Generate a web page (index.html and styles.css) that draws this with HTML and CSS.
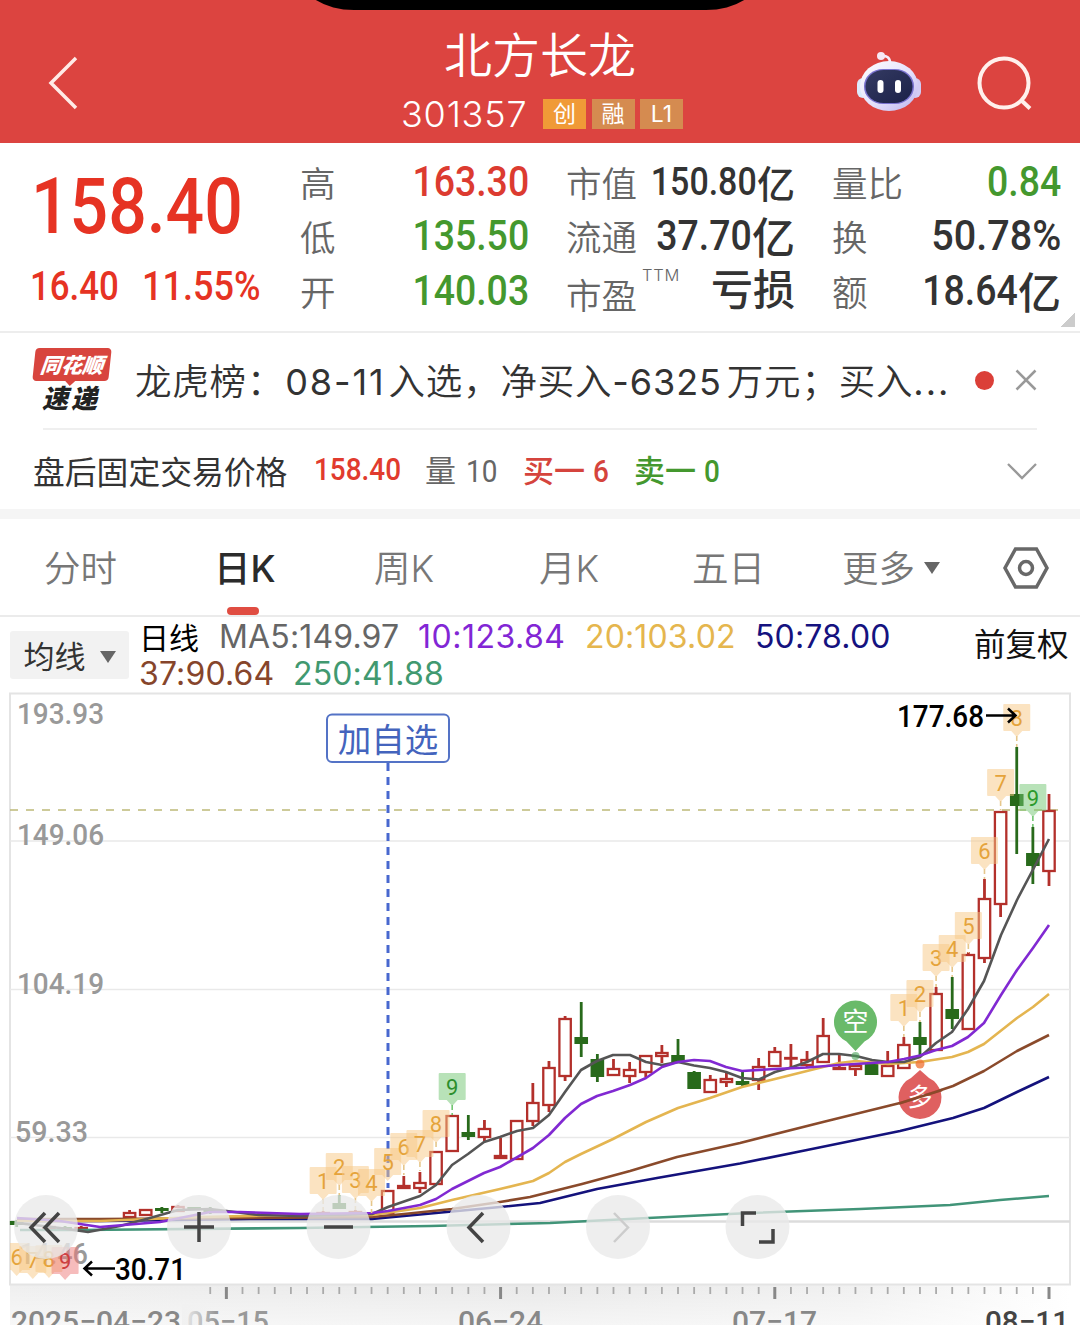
FILE: index.html
```html
<!DOCTYPE html>
<html lang="zh-CN">
<head>
<meta charset="utf-8">
<title>北方长龙 301357</title>
<link rel="stylesheet" href="styles.css">
</head>
<body>
<header class="header">
  <div class="island"></div>
  <svg class="back" width="34" height="56" viewBox="0 0 34 56"><path d="M29 3 4 28 29 53"/></svg>
  <div class="title">
    <h1>北方长龙</h1>
    <div class="code"><span class="code-num">301357</span><span class="tag tag-hot">创</span><span class="tag">融</span><span class="tag">L1</span></div>
  </div>
  <svg class="robot" width="66" height="62" viewBox="0 0 66 62">
    <defs>
      <linearGradient id="shell" x1="0" y1="0" x2="1" y2="1"><stop offset="0" stop-color="#fff"/><stop offset=".55" stop-color="#e4e0fb"/><stop offset="1" stop-color="#bcb4ee"/></linearGradient>
      <linearGradient id="visor" x1="0" y1="0" x2="1" y2="1"><stop offset="0" stop-color="#343a62"/><stop offset="1" stop-color="#1b2148"/></linearGradient>
    </defs>
    <path d="M25 6q9-1 9 7" fill="none" stroke="#f5eefc" stroke-width="2.6"/><circle cx="25" cy="6" r="4" fill="#f7e9f5"/>
    <rect x="1" y="28" width="12" height="20" rx="6" fill="#dceafb"/><rect x="53" y="28" width="12" height="20" rx="6" fill="#d2ccf4"/>
    <ellipse cx="33" cy="36" rx="29" ry="25" fill="url(#shell)"/>
    <rect x="8" y="19" width="50" height="35" rx="19" ry="17" fill="#7972cf"/>
    <rect x="9.500" y="20" width="47" height="33" rx="18" ry="16" fill="url(#visor)"/>
    <rect x="21.500" y="30" width="6" height="13" rx="3" fill="#fff"/><rect x="39" y="30" width="6" height="13" rx="3" fill="#fff"/>
  </svg>
  <svg class="search" width="58" height="58" viewBox="0 0 58 58"><circle cx="28" cy="28" r="24.500"/><path d="M45 45 54 53.500"/></svg>
</header>

<section class="quote">
  <div class="price">
    <div class="last"><span class="num">158.40</span></div>
    <div class="change"><span class="num">16.40</span><span class="num pct">11.55%</span></div>
  </div>
  <dl class="stats stats-a">
    <div><dt>高</dt><dd class="up"><span class="num">163.30</span></dd></div>
    <div><dt>低</dt><dd class="down"><span class="num">135.50</span></dd></div>
    <div><dt>开</dt><dd class="down"><span class="num">140.03</span></dd></div>
  </dl>
  <dl class="stats stats-b">
    <div><dt>市值</dt><dd class="small"><span class="num">150.80</span>亿</dd></div>
    <div><dt>流通</dt><dd><span class="num">37.70</span>亿</dd></div>
    <div class="pe"><dt>市盈<sup>TTM</sup></dt><dd>亏损</dd></div>
  </dl>
  <dl class="stats stats-c">
    <div><dt>量比</dt><dd class="down"><span class="num">0.84</span></dd></div>
    <div><dt>换</dt><dd><span class="num wide">50.78%</span></dd></div>
    <div><dt>额</dt><dd><span class="num">18.64</span>亿</dd></div>
  </dl>
  <i class="corner"></i>
</section>

<section class="news">
  <div class="logo"><span class="logo-top">同花顺</span><span class="logo-bottom">速递</span></div>
  <p>龙虎榜：<b class="day">08-11</b>入选，净买入<b class="amount">-6325</b>万元；买入<b class="more">...</b></p>
  <i class="dot"></i>
  <svg class="close" width="22" height="22" viewBox="0 0 22 22"><path d="M1.500 1.500 20.500 20.500M20.500 1.500 1.500 20.500"/></svg>
</section>

<section class="after">
  <span class="after-label">盘后固定交易价格</span>
  <span class="num a-price">158.40</span>
  <span class="a-vol">量 <span class="num">10</span></span>
  <span class="a-buy">买一 <span class="num">6</span></span>
  <span class="a-sell">卖一 <span class="num">0</span></span>
  <svg class="chev" width="30" height="18" viewBox="0 0 30 18"><path d="M1 2 15 16 29 2"/></svg>
</section>

<nav class="tabs">
  <a class="t1">分时</a><a class="t2 on">日K</a><a class="t3">周K</a><a class="t4">月K</a><a class="t5">五日</a><a class="t6">更多<i></i></a>
  <svg class="gear" width="46" height="42" viewBox="0 0 46 42"><path d="M12.500 2h21L44 21 33.500 40h-21L2 21z"/><circle cx="23" cy="21" r="6.500"/></svg>
</nav>

<section class="legend">
  <button class="picker">均线<i></i></button>
  <div class="mas">
    <div class="ma-row"><span class="k">日线</span><span class="m5">MA5:149.97</span><span class="m10">10:123.84</span><span class="m20">20:103.02</span><span class="m50">50:78.00</span></div>
    <div class="ma-row"><span class="m37">37:90.64</span><span class="m250">250:41.88</span></div>
  </div>
  <span class="adjust">前复权</span>
</section>

<svg class="chart" id="chart" width="1080" height="633" viewBox="0 692 1080 633"></svg>
<script src="chart.js"></script>
</body>
</html>
```

FILE: styles.css
```css
* { box-sizing: border-box; margin: 0; padding: 0; }
body { width: 1080px; height: 1325px; overflow: hidden; background: #fff; color: #333; font-family: Inter, "Noto Sans CJK SC", sans-serif; }
.num { display: inline-block; font-family: Roboto, sans-serif; font-weight: 500; transform: scaleX(.87); transform-origin: right center; }
.num.wide { transform: scaleX(.92); }
svg { display: block; }

.header { position: relative; display: flex; height: 143px; background: #dc4440; color: #fff; }
.island { position: absolute; left: 300px; top: -50px; width: 460px; height: 60px; border-radius: 0 0 54px 54px / 0 0 34px 34px; background: #000; }
.back { margin: 55px 0 0 47px; fill: none; stroke: #ffebe7; stroke-width: 3.5; }
.title { width: 300px; margin: 22px 0 0 320px; }
.title h1 { margin-left: 43px; font: 350 48px/60px "Noto Sans CJK SC", sans-serif; white-space: nowrap; }
.code { display: flex; align-items: center; margin-top: 14px; height: 36px; }
.code-num { width: 142px; font-size: 36px; font-weight: 350; letter-spacing: .8px; }
.tag { width: 43px; height: 30px; margin-right: 5.500px; background: #d58b50; font: 23px/30px Inter, "Noto Sans CJK SC", sans-serif; text-align: center; }
.tag-hot { background: #f09a37; }
.robot { margin: 50px 0 0 155px; }
.search { margin: 55px 0 0 54px; fill: none; stroke: #fff0ec; stroke-width: 4; }

.quote { position: relative; display: flex; height: 190px; border-bottom: 2px solid #ededed; }
.price { width: 300px; padding-left: 30px; color: #e63323; white-space: nowrap; }
.price .num { transform-origin: left center; }
.last { height: 113px; padding: 16px 0 0 1px; font-size: 78px; line-height: 92px; }
.last .num { transform: scaleX(.87); }
.change { display: flex; height: 62px; font-size: 41px; line-height: 61px; }
.change .num { width: 112px; transform: scaleX(.85); }
.change .pct { transform: scaleX(.88); }
.stats { padding-top: 13px; font-size: 43px; }
.stats-a { width: 229px; }
.stats-b { width: 229px; margin-left: 37px; }
.stats-c { width: 229px; margin-left: 37px; }
.stats > div { display: flex; height: 54.300px; align-items: center; }
.stats dt { flex: none; width: 70px; margin-top: -2px; font: 350 35.500px/54px "Noto Sans CJK SC", sans-serif; color: #666; white-space: nowrap; }
.stats dd { flex: 1; min-width: 0; margin-top: -4px; display: flex; justify-content: flex-end; align-items: center; line-height: 54px; font-family: "Noto Sans CJK SC", sans-serif; font-weight: 500; white-space: nowrap; }
.stats .small { font-size: 38px; margin-top: -2px; }
.stats .small .num { font-size: 39px; }
.up { color: #dc3b30; }
.down { color: #44982e; }
.pe dt { position: relative; top: 3px; }
.pe dd { margin-top: -10px; font-size: 42px; }
.pe sup { position: absolute; left: 76px; top: -4px; font: 350 16.500px/24px Inter, sans-serif; letter-spacing: .8px; }
.corner { position: absolute; right: 5px; bottom: 4px; width: 14px; height: 14px; background: linear-gradient(135deg, transparent 50%, #ccc 50%); }

.news { display: flex; align-items: center; height: 96px; padding-left: 33px; }
.logo { width: 102px; height: 66px; }
.logo span { display: block; font-family: "Noto Sans CJK SC", sans-serif; font-weight: 900; font-style: italic; text-align: center; }
.logo-top { position: relative; width: 76px; height: 33px; margin-left: 1px; border-radius: 4px; background: #d8453e; color: #fff; font-size: 21px; line-height: 32px; transform: skewX(-6deg); }
.logo-top::after { content: ""; position: absolute; left: 32px; top: 32px; border: 6px solid transparent; border-top-color: #d8453e; border-bottom: 0; }
.logo-bottom { width: 76px; margin-top: -1px; color: #222; font-size: 26px; line-height: 33px; letter-spacing: 3px; }
.news p { width: 820px; font: 350 36.500px/56px "Noto Sans CJK SC", sans-serif; letter-spacing: .8px; white-space: nowrap; }
.news b { font-family: Inter, sans-serif; font-weight: 400; font-size: 36px; }
.news .day { margin: 0 3px 0 1px; letter-spacing: 1.900px; }
.news .amount { margin-right: 5px; letter-spacing: .9px; }
.news .more { letter-spacing: 2px; }
.dot { width: 19px; height: 19px; margin: -2px 0 0 20px; border-radius: 50%; background: #db3f38; }
.close { margin: -2px 0 0 21px; fill: none; stroke: #999; stroke-width: 2.500; }

.after { position: relative; display: flex; align-items: center; height: 80px; padding: 2px 0 0 33px; font: 31px/44px "Noto Sans CJK SC", sans-serif; white-space: nowrap; }
.after::before { content: ""; position: absolute; left: 43px; right: 43px; top: -1px; height: 2px; background: #efefef; }
.after .num { transform: scaleX(.9); transform-origin: left center; font-size: 31px; }
.after-label { width: 281px; font-size: 31.800px; }
.after .a-price { width: 111px; color: #e13b2e; }
.a-vol { width: 98px; color: #666; word-spacing: 3px; }
.a-buy { width: 111px; color: #d5443d; font-weight: 500; word-spacing: 1px; }
.a-sell { color: #44982e; font-weight: 500; word-spacing: 1px; }
.a-vol .num { font-weight: 400; }
.chev { position: absolute; left: 1007px; top: 33px; fill: none; stroke: #999; stroke-width: 2.300; }

.tabs { display: flex; height: 108px; border-top: 10px solid #f5f5f5; border-bottom: 2px solid #ebebeb; padding-left: 44px; font: 350 36.500px/101px Inter, "Noto Sans CJK SC", sans-serif; color: #777; }
.tabs a { position: relative; white-space: nowrap; }
.t1 { width: 170px; } .t2 { width: 160px; } .t3 { width: 165px; } .t4 { width: 153px; } .t5 { width: 150px; } .t6 { width: 161px; }
.tabs .on { color: #2b2b2b; font-weight: 500; }
.on::after { content: ""; position: absolute; left: 13px; bottom: 0; width: 32px; height: 8px; border-radius: 4px; background: #e04d42; }
.tabs i, .picker i { display: inline-block; border: 8px solid transparent; border-top: 12px solid #666; border-bottom: 0; vertical-align: 5px; }
.tabs i { margin-left: 9px; vertical-align: 8px; }
.gear { margin-top: 28px; fill: none; stroke: #686868; stroke-width: 3.500; }

.legend { display: flex; height: 75px; padding-left: 10px; }
.picker { width: 119px; height: 48px; margin-top: 14px; border: 0; border-radius: 3px; background: #f2f2f2; color: #333; font: 31px/48px "Noto Sans CJK SC", sans-serif; white-space: nowrap; }
.picker i { margin-left: 14px; }
.mas { width: 845px; padding-left: 10px; font-size: 32px; line-height: 40px; letter-spacing: .15px; }
.ma-row { display: flex; height: 37px; white-space: nowrap; }
.k { width: 80px; color: #000; font: 30px/38px "Noto Sans CJK SC", sans-serif; letter-spacing: 0; }
.m5 { width: 199px; color: #666; } .m10 { width: 167px; color: #8226d5; letter-spacing: .5px; } .m20 { width: 170px; color: #e5b64e; } .m50 { color: #15127f; }
.m37 { width: 154px; color: #86452b; } .m250 { color: #419970; }
.adjust { margin-top: 1px; color: #111; font: 31.500px/48px "Noto Sans CJK SC", sans-serif; white-space: nowrap; }

.chart text { font-family: Roboto, "Noto Sans CJK SC", sans-serif; font-weight: 500; }
.chart .axis { fill: #999; font-size: 30px; }
.chart .date { font-size: 30px; }
.chart .mark { fill: #000; font-size: 32px; }
.chart .line { fill: none; stroke-width: 2.600; stroke-linejoin: round; }
.chart .icon { fill: none; stroke: #444; stroke-width: 3.500; }
.chart .badge { font-size: 22px; text-anchor: middle; font-weight: 400; }
```

FILE: chart.js
```js
const RED = '#b3302b', GREEN = '#286a1b';
const out = [];
const add = s => out.push(s);
const X = k => 1049 - 16.13 * k;
const text = (cls, x, y, w, s, extra = '') =>
  add(`<text class="${cls}" x="${x}" y="${y}" textLength="${w}" lengthAdjust="spacingAndGlyphs" ${extra}>${s}</text>`);

// time axis background
add(`<defs><linearGradient id="gx"><stop offset="0" stop-color="#efefef"/><stop offset=".5" stop-color="#e9e9e9"/><stop offset=".8" stop-color="#f0f0f0"/><stop offset="1" stop-color="#fff"/></linearGradient>
<linearGradient id="gy" x2="0" y2="1"><stop offset="0" stop-color="#fff" stop-opacity="0"/><stop offset="1" stop-color="#fff" stop-opacity=".55"/></linearGradient></defs>
<rect x="10" y="1285" width="1060" height="40" fill="url(#gx)"/><rect x="10" y="1285" width="1060" height="40" fill="url(#gy)"/>`);

// frame and grid
add('<rect x="10" y="693.5" width="1060" height="591" fill="none" stroke="#e4e4e4" stroke-width="2"/>');
[841, 989.5, 1137.5].forEach(y => add(`<path d="M10 ${y}H1070" stroke="#e9e9e9" stroke-width="1.6"/>`));
add('<path d="M10 1221.5H1070" stroke="#dcdcdc" stroke-width="2.6"/>');
add('<path d="M10 810H1066" stroke="#bdb978" stroke-width="1.6" stroke-dasharray="8 8"/>');
text('axis', 17, 724, 87, '193.93');
text('axis', 17, 845, 87, '149.06');
text('axis', 17, 994, 87, '104.19');
text('axis', 15, 1142, 73, '59.33');
text('axis', 19, 1264, 69, '14.46');

// watch-list marker
add('<path d="M388 763V1188" stroke="#4868cf" stroke-width="3" stroke-dasharray="8 6"/>');

// candles: [k, up, high, bodyTop, bodyBottom, low]
[[0,1,794,810,872,886],[1,0,827,853,866,884],[2,0,747,794,806,854],[3,1,811,811,905,917],[4,1,879,898,959,963],
[5,1,952,954,1030,1030],[6,0,977,1009,1019,1029],[7,1,987,993,1051,1051],[8,0,1022,1037,1045,1057],[9,1,1037,1044,1069,1069],
[10,1,1051,1065,1077,1077],[11,0,1064,1064,1075,1075],[12,1,1064,1065,1070,1076],[13,1,1055,1067,1070,1070],[14,1,1018,1035,1063,1063],
[15,1,1051,1059,1066,1068],[16,1,1044,1057,1059,1067],[17,1,1047,1051,1067,1067],[18,1,1058,1066,1081,1090],[19,0,1072,1081,1085,1086],
[20,1,1073,1078,1083,1087],[21,1,1075,1079,1093,1093],[22,0,1071,1072,1089,1089],[23,0,1039,1055,1062,1062],[24,1,1045,1052,1057,1063],
[25,1,1055,1055,1073,1077],[26,1,1062,1069,1077,1083],[27,1,1059,1068,1076,1076],[28,0,1054,1059,1077,1082],[29,0,1002,1037,1044,1057],
[30,1,1016,1018,1077,1081],[31,1,1061,1067,1106,1112],[32,1,1083,1102,1122,1126],[33,1,1120,1120,1160,1160],[34,1,1138,1155,1159,1159],
[35,1,1120,1128,1138,1141],[36,0,1115,1132,1137,1140],[37,1,1115,1115,1152,1152],[38,1,1151,1151,1185,1185],[39,1,1172,1182,1189,1193],
[40,1,1176,1185,1189,1189],[41,1,1190,1190,1214,1214],[43,1,1210,1211,1213,1213],[44,0,1195,1203,1209,1209],[45,1,1211,1212,1213,1213],
[49,1,1213,1215,1217,1218],[52,0,1207,1210,1213,1214],[53,0,1207,1207,1210,1210],[54,1,1205,1206,1212,1212],[55,0,1207,1208,1211,1213],
[56,1,1209,1209,1216,1216],[57,1,1210,1212,1218,1218],[60,1,1226,1227,1229,1230],[61,0,1226,1227,1230,1230],[62,1,1224,1226,1229,1232],[64,0,1220,1221,1225,1227]
].forEach(([k, up, h, t, b, l]) => {
  const x = X(k), c = up ? RED : GREEN;
  add(`<path d="M${x} ${h}V${t}M${x} ${b}V${l}" stroke="${c}" stroke-width="2.8"/>`);
  if (up) add(`<rect x="${x - 5.7}" y="${t + 1}" width="11.4" height="${Math.max(b - t - 2, .6)}" fill="#fff" stroke="${c}" stroke-width="2.3"/>`);
  else add(`<rect x="${x - 6.8}" y="${t}" width="13.6" height="${b - t}" fill="${c}"/>`);
});

// moving averages
[['#419478', '20,1230 80,1230 300,1228 430,1226 550,1223 648,1218 750,1213 860,1209 950,1205 1000,1200 1049,1196'],
['#14127c', '17,1221 100,1221 250,1219 372,1219 436,1213 500,1207 540,1203 597,1189 657,1178 740,1163.5 807,1150 900,1131 953,1118 984,1108 1017,1092 1049,1077'],
['#8a4a2b', '17,1219 100,1219 250,1218 372,1217 404,1214 452,1209 500,1202 530,1197 558,1190 582,1184 630,1171 677,1157 740,1143 823,1122 900,1103 920,1097 953,1086 984,1071 1017,1051 1049,1035'],
['#e4b550', '17,1221 100,1221 200,1217 300,1215 372,1215 420,1208 452,1200 500,1189 533,1181 549,1173 565,1162 581,1154 613,1139 646,1122 678,1108 710,1098 742,1087 775,1079 807,1071 823,1067 839,1063 856,1061 888,1064 920,1062 952,1057 968,1052 984,1044 1017,1018 1033,1007 1049,994'],
['#555', '17,1223 60,1228 88,1232 120,1226 150,1218 178,1210 210,1209 259,1215 300,1216 372,1214 388,1207 420,1196 436,1185 452,1165 468,1154 484,1142 500,1137 517,1131 533,1128 549,1115 565,1092 581,1070 597,1061 613,1055 630,1055 646,1062 662,1065 678,1062 694,1065.5 710,1068 726,1072 742,1078 759,1079.5 775,1072 791,1067.5 807,1062 823,1054 839,1054 856,1056 872,1060 888,1062 904,1062 920,1057 936,1043 952,1032 968,1009 984,981 1001,935 1017,900 1037,862 1049,839'],
['#8129d2', '17,1218 60,1221 100,1227 160,1222 210,1212 240,1212 300,1214 372,1213 388,1211 420,1205 436,1199 452,1189 484,1173 500,1167 533,1148 549,1135 565,1118 581,1104 597,1096 613,1091 630,1085 646,1078 662,1067 678,1062 694,1060 710,1061 726,1067 742,1071 775,1069 807,1067.5 839,1065 872,1063 888,1062 904,1059 920,1055.500 936,1050 952,1046 968,1037 984,1023 1001,995 1017,970 1033,948 1049,925']
].forEach(([c, p]) => add(`<polyline class="line" stroke="${c}" points="${p}"/>`));

// countdown badges: [k, top, label, fill, colour, line end]
const tan = '#f7c884', tx = '#e5a33b';
add('<clipPath id="plot"><rect x="10" y="692" width="1060" height="593"/></clipPath><g clip-path="url(#plot)">');
[[64,1243,6],[63,1246,7],[62,1245,8],[61,1247,9,'#ee7a7a','#cf3f3f'],
[45,1167,1,0,0,1211],[44,1153,2,0,0,1195],[43,1166,3,0,0,1210],[42,1169,4,0,0,1213],[41,1148,5],[40,1133,6,0,0,1175],[39,1130,7,0,0,1171],[38,1110,8,0,0,1150],
[37,1073,9,'#72c672','#2c8f2c',1115],[9,994,1,0,0,1037],[8,980,2,0,0,1022],[7,944,3,0,0,987],[6,935,4,0,0,977],[5,912,5,0,0,953],[4,837,6,0,0,879],
[3,769,7,0,0,810],[2,704,8,0,0,747],[1,784,9,'#72c672','#2c9a2c',827]
].forEach(([k, y, n, f, c, e]) => {
  const x = X(k);
  if (e) add(`<path d="M${x} ${y + 32}V${e}" stroke="${f || '#e5c78c'}" stroke-width="1.6" stroke-dasharray="5 3"/>`);
  add(`<path d="M${x - 12.5} ${y}h25q1 0 1 1v25q0 1-1 1h-7l-5.500 6-5.500-6h-7q-1 0-1-1v-25q0-1 1-1z" fill="${f || tan}" opacity=".5"/>`);
  add(`<text class="badge" x="${x}" y="${y + 21.5}" fill="${c || tx}">${n}</text>`);
});
add('</g>');

// short / long pins
add(`<g font-size="25" text-anchor="middle"><path d="M855.5 1051l-9-9.500a21.500 21.500 0 1 1 18 0z" fill="#55b055" opacity=".88"/><circle cx="855.5" cy="1056" r="4" fill="#4aa45a" opacity=".6"/><text x="855.5" y="1031" fill="#fff" font-size="26" style="font-weight:400">空</text>
<path d="M920 1070l-9 8a21.500 21.500 0 1 0 18 0z" fill="#d94444" opacity=".85"/><circle cx="920" cy="1064" r="4.500" fill="#f07030" opacity=".75"/><text x="920" y="1106" fill="#fff" style="font-weight:400">多</text><path d="M899 1103.500 942 1090" stroke="#8a4a2b" stroke-width="2.500"/></g>`);

// marker label and extremes
add('<rect x="327" y="714.5" width="122" height="47.500" rx="5" fill="#fff" stroke="#5473c6" stroke-width="2"/><text x="388" y="752" text-anchor="middle" font-size="33.5" fill="#4464bd" style="font-weight:400">加自选</text>');
text('mark', 897, 727, 87, '177.68');
add('<path d="M986 715.500H1015M1008 708.500 1015.500 715.500 1008 722.500" fill="none" stroke="#000" stroke-width="2.5"/>');
text('mark', 115, 1280, 71, '30.71');
add('<path d="M115 1268.500H85M92 1261.500 84.500 1268.500 92 1275.500" fill="none" stroke="#000" stroke-width="2.5"/>');

// time ticks
for (let k = 0; k <= 52; k++) {
  const main = k % 17 === 0;
  add(`<path d="M${X(k)} 1287V${main ? 1299 : 1294}" stroke="${main ? '#888' : '#aaa'}" stroke-width="${main ? 3 : 1.8}"/>`);
}
text('date', 11, 1332, 170, '2025−04−23', 'fill="#888"');
text('date', 187, 1332, 82, '05−15', 'fill="#999"');
text('date', 458, 1332, 85, '06−24', 'fill="#888"');
text('date', 732, 1332, 85, '07−17', 'fill="#888"');
text('date', 985, 1332, 84, '08−11', 'fill="#444"');
add('<defs><linearGradient id="fade"><stop offset="0" stop-color="#f1f1f1"/><stop offset="1" stop-color="#f1f1f1" stop-opacity="0"/></linearGradient></defs><rect x="182" y="1304" width="34" height="21" fill="url(#fade)"/>');

// floating controls
[46, 199, 338.5, 478.5, 618, 757.5].forEach(x => add(`<circle cx="${x}" cy="1227" r="32" fill="#e9e9e9" opacity=".78"/>`));
add(`<g class="icon"><path d="M45 1213 31 1227.500 45 1242M59 1213 45 1227.500 59 1242"/><path d="M184 1227H214M199 1212V1242"/><path d="M324 1227H353"/><path d="M483 1213 469 1227.500 483 1242"/><path d="M614 1213 628 1227.500 614 1242" stroke="#ccc" stroke-width="2.5"/><path d="M742.500 1226V1213H756M773 1229V1242H759"/></g>`);

document.getElementById('chart').innerHTML = out.join('');
```
